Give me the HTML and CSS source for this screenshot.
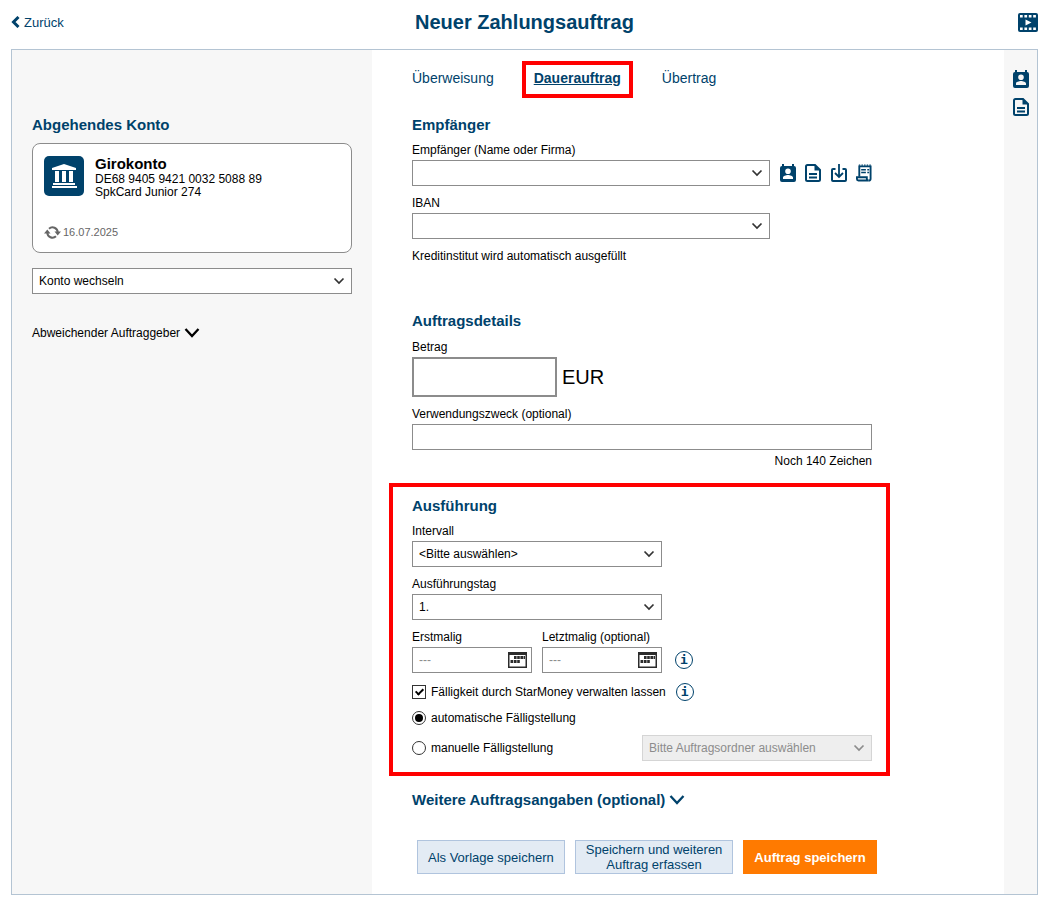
FILE: index.html
```html
<!DOCTYPE html>
<html lang="de">
<head>
    <meta charset="UTF-8">
    <title>Neuer Zahlungsauftrag</title>
    <link rel="stylesheet" href="styles.css">
</head>
<body>
    <!-- shared icons -->
    <svg class="sprite" aria-hidden="true">
        <symbol id="chevron" viewBox="0 0 12 8">
            <path d="M1.5 1.5L6 6l4.5-4.5" fill="none" stroke="currentColor" stroke-width="1.7"/>
        </symbol>
        <symbol id="chevron-big" viewBox="0 0 16 12">
            <path d="M1.5 2L8 9l6.500-7" fill="none" stroke="currentColor" stroke-width="2.3"/>
        </symbol>
        <symbol id="contact" viewBox="0 0 16 18">
            <path fill-rule="evenodd" fill="currentColor" d="M2 0h2v2h8V0h2v2a2 2 0 0 1 2 2v12a2 2 0 0 1-2 2H2a2 2 0 0 1-2-2V4a2 2 0 0 1 2-2zM8 4.500a2.800 2.800 0 1 0 0 5.600a2.800 2.800 0 0 0 0-5.600zM3 15h10v-1.500c0-1.500-3-2.500-5-2.500s-5 1-5 2.500z"/>
        </symbol>
        <symbol id="document" viewBox="0 0 16 18">
            <path d="M2.500 1H10l5 5v9.500a1.500 1.500 0 0 1-1.500 1.500h-11A1.500 1.500 0 0 1 1 15.500v-13A1.500 1.500 0 0 1 2.500 1z" fill="none" stroke="currentColor" stroke-width="2"/>
            <path d="M9.500 1v5.500H15z" fill="currentColor"/>
            <path d="M4 10h8M4 13.500h8" stroke="currentColor" stroke-width="1.800"/>
        </symbol>
        <symbol id="import" viewBox="0 0 16 18">
            <path d="M4.500 5H2a1 1 0 0 0-1 1v10a1 1 0 0 0 1 1h12a1 1 0 0 0 1-1V6a1 1 0 0 0-1-1h-2.500" fill="none" stroke="currentColor" stroke-width="2"/>
            <path d="M8 0v12M4 9l4 4 4-4" fill="none" stroke="currentColor" stroke-width="1.8"/>
        </symbol>
        <symbol id="receipt" viewBox="0 0 17 18">
            <path d="M3.500 13V2h12v13a2 2 0 0 1-2 2" fill="none" stroke="currentColor" stroke-width="2"/>
            <path d="M3 .7h13" stroke="currentColor" stroke-width="1.4" stroke-dasharray="1.5 1.3"/>
            <path d="M1 13.500h10.500V15a2 2 0 0 0 2 2h-11A1.500 1.500 0 0 1 1 15.500z" fill="none" stroke="currentColor" stroke-width="2"/>
            <path d="M5.500 5.500h5M5.500 8.500h5M12 5.500h2M12 8.500h2" stroke="currentColor" stroke-width="1.500"/>
        </symbol>
        <symbol id="calendar" viewBox="0 0 19 16">
            <path d="M.75.75h17.500v14.500H.75z" fill="#fff" stroke="#2b2b2b" stroke-width="1.500"/>
            <path d="M0 0h19v3H0z" fill="#2b2b2b"/>
            <path d="M6 4h2.600v3H6zM9.200 4h2.600v3H9.200zM12.400 4H15v3h-2.600zM15.500 4h1.500v3h-1.500zM2.500 8h2.800v3H2.500zM6 8h2.600v3H6zM9.200 8h2.600v3H9.200z" fill="#2b2b2b"/>
        </symbol>
    </svg>

    <header class="topbar">
        <a href="#" class="back">
            <svg width="9" height="12" viewBox="0 0 9 12"><path d="M7.500 1l-5 5 5 5" fill="none" stroke="currentColor" stroke-width="3"/></svg>
            Zurück
        </a>
        <h1>Neuer Zahlungsauftrag</h1>
        <a href="#" class="video" aria-label="Video">
            <svg width="20" height="19" viewBox="0 0 20 19">
                <rect width="20" height="19" rx="2" fill="currentColor"/>
                <path d="M2 3.200h16M2 15.800h16" stroke="#fff" stroke-width="2.600" stroke-dasharray="2.700 1.700"/>
                <path d="M7.500 6.500v6l6-3z" fill="#fff"/>
            </svg>
        </a>
    </header>

    <div class="panel">
        <aside class="account">
            <h2>Abgehendes Konto</h2>
            <div class="card">
                <div class="card-head">
                    <svg class="bank" width="40" height="40" viewBox="0 0 40 40">
                        <rect width="40" height="40" rx="5" fill="#00426b"/>
                        <path d="M20 8l12 4v2H8v-2zM11 15h4v11h-4zM18 15h4v11h-4zM25 15h4v11h-4zM9 27h22v2H9zM8 30h25v2H8z" fill="#fff"/>
                    </svg>
                    <div class="card-text">
                        <strong>Girokonto</strong>
                        <span>DE68 9405 9421 0032 5088 89</span>
                        <span>SpkCard Junior 274</span>
                    </div>
                </div>
                <div class="updated">
                    <svg width="17" height="13" viewBox="0 0 17 13">
                        <path d="M5 2.700A5.200 5.200 0 0 1 13.700 6.500M12 10.300A5.200 5.200 0 0 1 3.300 6.500" fill="none" stroke="currentColor" stroke-width="2"/>
                        <path d="M0 7.500h6.500L3.300 3.500zM10.500 5.500H17l-3.300 4z" fill="currentColor"/>
                    </svg>
                    16.07.2025
                </div>
            </div>
            <div class="select">
                <select aria-label="Konto wechseln"><option>Konto wechseln</option></select>
                <svg><use href="#chevron"/></svg>
            </div>
            <button type="button" class="toggle">Abweichender Auftraggeber <svg><use href="#chevron-big"/></svg></button>
        </aside>

        <main>
            <nav class="tabs">
                <a href="#">Überweisung</a>
                <a href="#" class="active">Dauerauftrag</a>
                <a href="#">Übertrag</a>
            </nav>

            <form>
                <section class="recipient">
                    <h2>Empfänger</h2>
                    <label for="name">Empfänger (Name oder Firma)</label>
                    <div class="name-row">
                        <div class="select wide">
                            <select id="name"><option></option></select>
                            <svg><use href="#chevron"/></svg>
                        </div>
                        <div class="tools">
                            <a href="#" aria-label="Kontakte"><svg><use href="#contact"/></svg></a>
                            <a href="#" aria-label="Vorlagen"><svg><use href="#document"/></svg></a>
                            <a href="#" aria-label="Import"><svg><use href="#import"/></svg></a>
                            <a href="#" aria-label="Rechnung"><svg><use href="#receipt"/></svg></a>
                        </div>
                    </div>
                    <label for="iban">IBAN</label>
                    <div class="select wide">
                        <select id="iban"><option></option></select>
                        <svg><use href="#chevron"/></svg>
                    </div>
                    <p>Kreditinstitut wird automatisch ausgefüllt</p>
                </section>

                <section class="details">
                    <h2>Auftragsdetails</h2>
                    <label for="amount">Betrag</label>
                    <div class="amount-row">
                        <input type="text" id="amount">
                        <span>EUR</span>
                    </div>
                    <label for="purpose">Verwendungszweck (optional)</label>
                    <input type="text" id="purpose">
                    <p class="counter">Noch 140 Zeichen</p>
                </section>

                <section class="execution">
                    <h2>Ausführung</h2>
                    <label for="interval">Intervall</label>
                    <div class="select medium">
                        <select id="interval"><option>&lt;Bitte auswählen&gt;</option></select>
                        <svg><use href="#chevron"/></svg>
                    </div>
                    <label for="day">Ausführungstag</label>
                    <div class="select medium">
                        <select id="day"><option>1.</option></select>
                        <svg><use href="#chevron"/></svg>
                    </div>
                    <div class="dates">
                        <div class="date">
                            <label for="first">Erstmalig</label>
                            <div class="date-box">
                                <input type="text" id="first" placeholder="---">
                                <svg><use href="#calendar"/></svg>
                            </div>
                        </div>
                        <div class="date">
                            <label for="last">Letztmalig (optional)</label>
                            <div class="date-box">
                                <input type="text" id="last" placeholder="---">
                                <svg><use href="#calendar"/></svg>
                            </div>
                        </div>
                        <button type="button" class="info">i</button>
                    </div>
                    <div class="choice">
                        <input type="checkbox" id="managed" checked>
                        <label for="managed">Fälligkeit durch StarMoney verwalten lassen</label>
                        <button type="button" class="info">i</button>
                    </div>
                    <div class="choice">
                        <input type="radio" name="due" id="auto" checked>
                        <label for="auto">automatische Fälligstellung</label>
                    </div>
                    <div class="choice manual">
                        <input type="radio" name="due" id="manual">
                        <label for="manual">manuelle Fälligstellung</label>
                        <div class="select folder">
                            <select aria-label="Auftragsordner" disabled><option>Bitte Auftragsordner auswählen</option></select>
                            <svg><use href="#chevron"/></svg>
                        </div>
                    </div>
                </section>

                <button type="button" class="more">Weitere Auftragsangaben (optional) <svg><use href="#chevron-big"/></svg></button>

                <div class="actions">
                    <button type="button">Als Vorlage speichern</button>
                    <button type="button">Speichern und weiteren<br>Auftrag erfassen</button>
                    <button type="submit" class="primary">Auftrag speichern</button>
                </div>
            </form>
        </main>

        <aside class="sidebar">
            <a href="#" aria-label="Kontakte"><svg><use href="#contact"/></svg></a>
            <a href="#" aria-label="Vorlagen"><svg><use href="#document"/></svg></a>
        </aside>
    </div>
</body>
</html>
```
FILE: styles.css
```css
* {
    box-sizing: border-box;
}

body {
    margin: 0;
    padding: 0 7px 6px 11px;
    font-family: "Liberation Sans", Arial, sans-serif;
    font-size: 12px;
    line-height: 16px;
    color: #000;
    background-color: #fff;
}

h1, h2, p {
    margin: 0;
}

h1 {
    font-size: 20px;
    line-height: 24px;
    color: #00426b;
}

h2 {
    font-size: 15px;
    line-height: 20px;
    color: #00426b;
}

a {
    color: #00426b;
    text-decoration: none;
}

svg {
    display: block;
    flex: none;
}

.sprite {
    position: absolute;
    width: 0;
    height: 0;
}

button, input, select {
    font-family: inherit;
    font-size: 12px;
}

/* top bar */
.topbar {
    display: grid;
    grid-template-columns: 1fr auto 1fr;
    align-items: center;
    height: 44px;
    margin-bottom: 5px;
}

.back {
    display: flex;
    align-items: center;
    gap: 4px;
    font-size: 13px;
    line-height: 17px;
}

.video {
    justify-self: end;
}

/* panel */
.panel {
    display: flex;
    border: 1px solid #b4c4d3;
}

.account {
    flex: none;
    width: 360px;
    padding: 65px 20px 20px;
    background-color: #f7f7f7;
}

.card {
    height: 110px;
    margin: 8px 0 15px;
    padding: 10px 11px 12px;
    display: flex;
    flex-direction: column;
    justify-content: space-between;
    border: 1px solid #8c8c8c;
    border-radius: 8px;
    background-color: #fff;
}

.card-head {
    display: flex;
    gap: 11px;
}

.bank {
    margin-top: 2px;
}

.card-text {
    display: flex;
    flex-direction: column;
    line-height: 13px;
}

.card-text strong {
    font-size: 15px;
    line-height: 19px;
}

.updated {
    display: flex;
    align-items: center;
    gap: 2px;
    font-size: 11px;
    color: #666;
}

.toggle, .more {
    display: flex;
    align-items: center;
    gap: 4px;
    padding: 0;
    border: 0;
    background: none;
    cursor: pointer;
}

.toggle {
    margin-top: 31px;
    line-height: 16px;
    color: #000;
}

.toggle svg, .more svg {
    width: 16px;
    height: 12px;
}

main {
    flex: 1;
    padding: 11px 40px 20px;
}

.tabs {
    display: flex;
    gap: 29px;
    height: 37px;
    margin-bottom: 17px;
    font-size: 14px;
    line-height: 35px;
}

.tabs .active {
    margin-left: -1px;
    padding: 0 8px;
    border: 4px solid #f00;
    line-height: 27px;
    font-weight: bold;
    text-decoration: underline;
}

form {
    max-width: 460px;
}

section label {
    display: block;
    margin: 9px 0 2px;
}

section h2 + label {
    margin-top: 8px;
}

.recipient h2 + label {
    margin-top: 7px;
}

/* fields */
.select {
    position: relative;
}

.wide {
    width: 358px;
}

.medium {
    width: 250px;
}

.select select, input[type="text"] {
    display: block;
    width: 100%;
    height: 26px;
    padding: 0 6px;
    border: 1px solid #8c8c8c;
    border-radius: 0;
    background-color: #fff;
    color: #000;
    appearance: none;
}

.select svg {
    position: absolute;
    top: 9px;
    right: 7px;
    width: 12px;
    height: 8px;
    color: #333;
    pointer-events: none;
}

.select select:disabled {
    border-color: #d5d5d5;
    background-color: #eee;
    color: #8c8c8c;
    opacity: 1;
}

.select select:disabled + svg {
    color: #8c8c8c;
}

.name-row {
    display: flex;
    gap: 10px;
}

.tools {
    flex: 1;
    display: flex;
    justify-content: space-between;
    align-items: center;
}

.tools svg, .sidebar svg {
    width: 16px;
    height: 18px;
}

.recipient p {
    margin-top: 9px;
}

.details {
    margin-top: 47px;
}

.amount-row {
    display: flex;
    align-items: center;
    gap: 5px;
    font-size: 20px;
}

.amount-row input[type="text"] {
    width: 145px;
    height: 40px;
    border-width: 2px;
}

.details .counter {
    margin-top: 3px;
    text-align: right;
}

/* framed block */
.execution {
    margin: 14px -18px 0 -23px;
    padding: 9px 14px 11px 19px;
    border: 4px solid #f00;
}

.execution h2 + label {
    margin-top: 7px;
}

.dates {
    display: flex;
    align-items: flex-end;
    gap: 10px;
    margin-bottom: 9px;
}

.date {
    width: 120px;
}

.date-box {
    position: relative;
}

.date-box input::placeholder {
    color: #8c8c8c;
}

.date-box svg {
    position: absolute;
    top: 5px;
    right: 5px;
    width: 19px;
    height: 16px;
}

.info {
    width: 18px;
    height: 18px;
    padding: 0;
    border: 1px solid #00426b;
    border-radius: 50%;
    background-color: #fff;
    color: #00426b;
    font-family: "DejaVu Sans Mono", monospace;
    font-size: 13px;
    line-height: 14px;
    font-weight: bold;
}

.dates .info {
    margin: 0 0 4px 3px;
}

.choice {
    display: flex;
    align-items: center;
    gap: 5px;
    min-height: 20px;
    margin-bottom: 6px;
}

.choice label {
    margin: 0;
}

.choice .info {
    margin-left: 5px;
}

.choice input {
    flex: none;
    width: 14px;
    height: 14px;
    margin: 0;
    border: 1px solid #333;
    background-color: #fff;
    appearance: none;
}

.choice input[type="checkbox"]:checked::after {
    content: "";
    display: block;
    width: 3px;
    height: 6px;
    margin: 1px 4px;
    border: solid #000;
    border-width: 0 2px 2px 0;
    transform: rotate(45deg);
}

.choice input[type="radio"] {
    border-radius: 50%;
}

.choice input[type="radio"]:checked {
    padding: 2px;
    background-color: #000;
    background-clip: content-box;
}

.manual {
    margin-bottom: 0;
}

.folder {
    width: 230px;
    margin: 1px 0 0 auto;
}

.more {
    margin-top: 14px;
    font-size: 15px;
    line-height: 20px;
    font-weight: bold;
    color: #00426b;
}

.actions {
    display: flex;
    gap: 10px;
    margin: 30px -5px 0 5px;
}

.actions button {
    flex: none;
    height: 34px;
    padding: 0 10px;
    border: 1px solid #b0c4de;
    background-color: #e3ebf4;
    color: #00426b;
    font-size: 13px;
    line-height: 15px;
    cursor: pointer;
}

.actions .primary {
    border-color: #ff7a00;
    background-color: #ff7a00;
    color: #fff;
    font-weight: bold;
}

.sidebar {
    flex: none;
    display: flex;
    flex-direction: column;
    align-items: center;
    gap: 10px;
    width: 33px;
    padding-top: 20px;
    background-color: #f7f7f7;
}
```
